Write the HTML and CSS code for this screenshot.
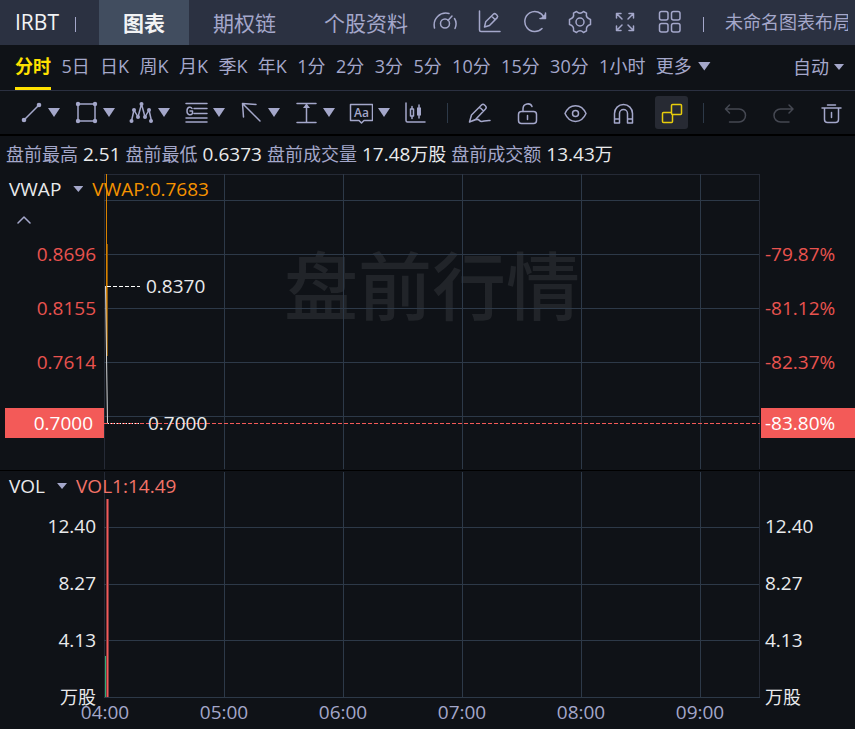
FILE: index.html
```html
<!DOCTYPE html>
<html lang="zh-CN">
<head>
<meta charset="utf-8">
<title>IRBT 图表</title>
<link rel="stylesheet" href="styles.css">
</head>
<body>
<header class="topbar">
  <h1 class="symbol">IRBT</h1>
  <span class="bar-divider"></span>
  <nav class="tabs">
    <a class="tab tab-active" href="#chart">图表</a>
    <a class="tab" href="#options">期权链</a>
    <a class="tab" href="#profile">个股资料</a>
  </nav>
  <div class="top-icons">
    <button class="icon-btn" aria-label="仪表盘"><svg viewBox="0 0 24 24"><path d="M1.500 18C-.5 8.500 7 1.500 16 3.500M21.500 8.500c2 3 2 6.500.5 10"/><circle cx="12" cy="13.500" r="4.500"/><path d="M15 10.500 19 6"/></svg></button>
    <button class="icon-btn" aria-label="画图"><svg viewBox="0 0 24 24"><path d="M1.500 1v19q0 1.500 1.500 1.500h19"/><path d="m6.500 17 1.200-5.200 7.600-7.600q1.300-1.200 2.700 0l1 1q1.300 1.300 0 2.700l-7.500 7.600zM13.500 6l3.700 3.700"/></svg></button>
    <button class="icon-btn" aria-label="刷新"><svg viewBox="0 0 24 24"><path d="M19 18.500A10 10 0 1 1 21 7.500"/><path d="M22.500 3v5.500H17"/><path class="fill" d="M23 3v6h-6z"/></svg></button>
    <button class="icon-btn" aria-label="设置"><svg viewBox="0 0 24 24"><path d="M8.500 1.500Q12 5 15.500 1.500l3 1.700q-1 4.800 4 6.300v5q-5 1.500-4 6.300l-3 1.700q-3.500-3.500-7 0l-3-1.700q1-4.800-4-6.300v-5q5-1.500 4-6.300z"/><circle cx="12" cy="12" r="4"/></svg></button>
    <button class="icon-btn" aria-label="全屏"><svg viewBox="0 0 24 24"><path d="M3.500 8V3.500H8M3.500 3.500 9 9M16 3.500h4.500V8M20.500 3.500 15 9M3.500 16v4.500H8M3.500 20.500 9 15M16 20.500h4.500V16M20.500 20.500 15 15"/></svg></button>
    <button class="icon-btn" aria-label="布局"><svg viewBox="0 0 24 24"><rect x="1.500" y="1.500" width="8.500" height="8.500" rx="2"/><rect x="13.500" y="1.500" width="8.500" height="8.500" rx="2"/><rect x="1.500" y="13.500" width="8.500" height="8.500" rx="2"/><rect x="13.500" y="13.500" width="8.500" height="8.500" rx="2"/></svg></button>
  </div>
  <span class="bar-divider"></span>
  <button class="layout-name">未命名图表布局</button>
</header>

<div class="periods">
  <nav class="period-list">
    <button class="period period-active">分时</button>
    <button class="period">5日</button>
    <button class="period">日K</button>
    <button class="period">周K</button>
    <button class="period">月K</button>
    <button class="period">季K</button>
    <button class="period">年K</button>
    <button class="period">1分</button>
    <button class="period">2分</button>
    <button class="period">3分</button>
    <button class="period">5分</button>
    <button class="period">10分</button>
    <button class="period">15分</button>
    <button class="period">30分</button>
    <button class="period">1小时</button>
    <button class="period">更多<span class="caret"></span></button>
  </nav>
  <button class="period period-auto">自动<span class="caret caret-small"></span></button>
</div>

<div class="toolbar">
  <div class="draw-tools">
    <button class="draw" aria-label="线段"><svg viewBox="0 0 24 24"><path d="M5 20 20 5"/><g class="fill"><circle cx="5" cy="20" r="2.300"/><circle cx="20" cy="5" r="2.300"/></g></svg><span class="caret"></span></button>
    <button class="draw" aria-label="矩形"><svg viewBox="0 0 24 24"><path d="M4 4h17v17H4z"/><g class="fill"><circle cx="4" cy="4" r="2.200"/><circle cx="21" cy="4" r="2.200"/><circle cx="4" cy="21" r="2.200"/><circle cx="21" cy="21" r="2.200"/></g></svg><span class="caret"></span></button>
    <button class="draw" aria-label="形态"><svg viewBox="0 0 24 24"><path d="M2.500 21 5 10l4 7 3.500-13 3.500 13 4-7 2.500 11"/><g class="fill"><circle cx="2.500" cy="21" r="2"/><circle cx="5" cy="10" r="2"/><circle cx="9" cy="17" r="2"/><circle cx="12.500" cy="4" r="2"/><circle cx="16" cy="17" r="2"/><circle cx="20" cy="10" r="2"/><circle cx="22" cy="21" r="2"/></g></svg><span class="caret"></span></button>
    <button class="draw" aria-label="江恩线"><svg viewBox="0 0 24 24"><path d="M2 3.500h21M10 8.500h13M10 13.500h13M2 18h21M2 22h21"/><path d="M8 8.500C7 6.500 3 6.500 3 11s4 4.500 5.500 2.500v-2.500H6"/></svg><span class="caret"></span></button>
    <button class="draw" aria-label="箭头"><svg viewBox="0 0 24 24"><path d="M21 21 4 4M17 4.500 3.500 3.500l1 13.500"/></svg><span class="caret"></span></button>
    <button class="draw" aria-label="测量"><svg viewBox="0 0 24 24"><path d="M3 3.500h19M3 22.500h19M12.500 5v17"/><path class="fill" d="m12.500 3.500 3.500 4.500H9z"/></svg><span class="caret"></span></button>
    <button class="draw" aria-label="文字"><svg viewBox="0 0 24 24"><path d="M1.500 4.500h22v16h-8.500l-2.500 2.500-2.500-2.500H1.500z"/><text class="glyph" x="5" y="17">Aa</text></svg><span class="caret"></span></button>
    <button class="draw" aria-label="K线"><svg viewBox="0 0 24 24"><path d="M2 3v17.500q0 1.500 1.500 1.500H21M6.500 9h3v7h-3zM8 6.500V9M8 16v2.500M15 5v13"/><path class="fill" d="M13 7.500h4v8h-4z"/></svg></button>
  </div>
  <span class="tool-divider"></span>
  <button class="tool" aria-label="连续绘图"><svg viewBox="0 0 24 24"><path d="m1.500 21 2-7L13.500 4q1.500-1.500 3 0l1 1q1.500 1.500 0 3l-10 10.500zM11.500 6l4 4M1.500 21c6-2 8-4 10-1.500 2 2.500 5-.5 10.500 0"/></svg></button>
  <button class="tool" aria-label="锁定"><svg viewBox="0 0 24 24"><rect x="2.500" y="10.500" width="18" height="12" rx="3"/><path d="M7 10.500V8c0-6 7.500-6.500 9-2.500M11.500 14.500v4"/></svg></button>
  <button class="tool" aria-label="显示"><svg viewBox="0 0 24 24"><path d="M1 12.500C5.500 2 17.500 2 22 12.500 17.500 23 5.500 23 1 12.500z"/><circle cx="11.500" cy="12.500" r="3"/></svg></button>
  <button class="tool" aria-label="磁吸"><svg viewBox="0 0 24 24"><path d="M2.500 22V12.500a9 9 0 0 1 18 0V22h-5v-9.500a4 4 0 0 0-8 0V22zM2.500 18h5M15.500 18h5"/></svg></button>
  <button class="tool tool-active" aria-label="联动"><svg viewBox="0 0 24 24"><rect x="11.500" y="3.500" width="10" height="10" rx="1"/><path d="M11 11.500H3.500q-1 0-1 1v8q0 1 1 1h8q1 0 1-1v-7"/></svg></button>
  <span class="tool-divider"></span>
  <button class="tool tool-muted" aria-label="撤销"><svg viewBox="0 0 24 24"><path d="m5.500 4-4 4H15a6.500 6.500 0 0 1 0 13H5.500M1.500 8l4 4"/></svg></button>
  <button class="tool tool-muted" aria-label="重做"><svg viewBox="0 0 24 24"><path d="m17 4 4 4H8.500a6.500 6.500 0 0 0 0 13H17M21 8l-4 4"/></svg></button>
  <button class="tool" aria-label="删除"><svg viewBox="0 0 24 24"><path d="M2 7h19M7.500 4h8M4.500 7v11.500q0 3 3 3h8q3 0 3-3V7M11.500 11.500v5"/></svg></button>
</div>

<main id="chart">
  <dl class="stats">
    <dt>盘前最高</dt><dd>2.51</dd>
    <dt>盘前最低</dt><dd>0.6373</dd>
    <dt>盘前成交量</dt><dd>17.48<small>万股</small></dd>
    <dt>盘前成交额</dt><dd>13.43<small>万</small></dd>
  </dl>

  <section class="pane price-pane">
    <div class="legend"><button class="legend-name">VWAP<span class="caret caret-small"></span></button><span class="legend-vwap">VWAP:0.7683</span></div>
    <div class="axis axis-left">
      <button class="collapse" aria-label="收起"><svg viewBox="0 0 14 14"><path d="m1 10 6-6 6 6"/></svg></button>
      <span class="tick">0.8696</span><span class="tick">0.8155</span><span class="tick">0.7614</span>
      <span class="last">0.7000</span>
    </div>
    <div class="plot">
      <div class="watermark">盘前行情</div>
      <svg class="drawing" viewBox="0 0 656 296" preserveAspectRatio="none">
        <path class="edge" d="M0 .5h656M.5 0v295M655.500 0v295"/>
        <path class="grid" d="M0 26.500h655M0 80.500h655M0 134.500h655M0 188.500h655M0 242.500h655M120.500 0v295M239.500 0v295M358.500 0v295M477.500 0v295M596.500 0v295"/>
        <path class="vwap" d="M2.500 0v182"/>
        <path class="vwap-shade" d="M3.500 70v112"/>
        <path class="price" d="M1.500 112 3.500 249"/>
        <path class="last-line" d="M0 249.500h656"/>
        <path class="marker" d="M3 112.500h33"/>
        <path class="marker marker-dots" d="M4 249.500h33"/>
      </svg>
      <span class="callout callout-high">0.8370</span>
      <span class="callout callout-low">0.7000</span>
    </div>
    <div class="axis axis-right">
      <span class="tick">-79.87%</span><span class="tick">-81.12%</span><span class="tick">-82.37%</span>
      <span class="last">-83.80%</span>
    </div>
  </section>

  <section class="pane volume-pane">
    <div class="legend"><button class="legend-name">VOL<span class="caret caret-small"></span></button><span class="legend-vol">VOL1:14.49</span></div>
    <div class="axis axis-left">
      <span class="tick">12.40</span><span class="tick">8.27</span><span class="tick">4.13</span><span class="tick unit">万股</span>
    </div>
    <div class="plot">
      <svg class="drawing" viewBox="0 0 656 227" preserveAspectRatio="none">
        <path class="edge" d="M.5 1v226M655.500 1v226"/>
        <path class="grid" d="M0 56.500h655M0 113.500h655M0 169.500h655M0 226.500h656M120.500 1v226M239.500 1v226M358.500 1v226M477.500 1v226M596.500 1v226"/>
        <path class="vol-up" d="M1.500 185v41"/>
        <path class="vol-shade" d="M2.500 28v198"/>
        <path class="vol-down" d="M3.500 28v198"/>
        <path class="vol-shade" d="M4.500 28v198"/>
      </svg>
      <div class="times">
        <time>04:00</time><time>05:00</time><time>06:00</time><time>07:00</time><time>08:00</time><time>09:00</time>
      </div>
    </div>
    <div class="axis axis-right">
      <span class="tick">12.40</span><span class="tick">8.27</span><span class="tick">4.13</span><span class="tick unit">万股</span>
    </div>
  </section>
</main>
</body>
</html>
```
FILE: styles.css
```css
:root {
  --bg: #0f1217;
  --bar: #2b3141;
  --muted: #a4a7ca;
  --text: #e9eaec;
  --grid: #2d3948;
  --edge: #252a36;
  --red: #e9534f;
  --tag: #f35a58;
}

* { box-sizing: border-box; }

body {
  margin: 0;
  min-height: 100vh;
  background: var(--bg);
  color: var(--text);
  font: 18px/24px "Open Sans", "Noto Sans CJK SC", sans-serif;
  overflow-x: hidden;
}

button {
  padding: 0;
  border: 0;
  background: none;
  color: inherit;
  font: inherit;
  white-space: nowrap;
}

svg {
  display: block;
  fill: none;
  stroke: currentColor;
  stroke-width: 1.5;
  stroke-linecap: round;
  stroke-linejoin: round;
}

.fill { fill: currentColor; stroke: none; }

.glyph {
  fill: currentColor;
  stroke: none;
  font: 600 12px "Open Sans", sans-serif;
}

.caret {
  width: 13px;
  height: 9px;
  background: var(--muted);
  clip-path: polygon(0 0, 100% 0, 50% 100%);
}

.caret-small { width: 10px; height: 6px; }

/* Top bar */
.topbar {
  display: flex;
  align-items: center;
  height: 45px;
  padding: 0 7px 2px 15px;
  background: var(--bar);
  color: var(--muted);
}

.symbol {
  width: 60px;
  margin: 0;
  color: #f2f3f4;
  font-size: 21px;
  font-weight: 400;
}

.bar-divider {
  flex: none;
  width: 1px;
  height: 15px;
  margin-top: 6px;
  background: var(--muted);
}

.tabs { display: flex; height: 45px; margin: 2px 0 0 23px; }

.tab {
  padding: 0 24px;
  color: var(--muted);
  font-size: 21px;
  line-height: 46px;
  text-decoration: none;
  white-space: nowrap;
}

.tab-active { background: #414d5f; color: #f2f3f4; font-weight: 700; }

.top-icons { display: flex; gap: 21px; margin: 0 21px 0 1px; }

.icon-btn svg { width: 24px; height: 24px; }

.layout-name { flex: 1; margin-left: 21px; overflow: hidden; text-align: left; }

/* Periods */
.periods {
  display: flex;
  justify-content: space-between;
  height: 46px;
  padding: 0 11px 0 15px;
  border-bottom: 1px solid #2b3041;
  color: var(--muted);
}

.period-list {
  display: flex;
  flex: 0 1 696px;
  justify-content: space-between;
}

.period {
  display: flex;
  align-items: center;
  gap: 6px;
  border-bottom: 3px solid transparent;
}

.period-active { border-color: #ffe100; color: #ffe100; font-weight: 700; }

.period-auto { gap: 5px; padding-top: 2px; }

/* Drawing toolbar */
.toolbar {
  display: flex;
  align-items: center;
  gap: 15px;
  height: 45px;
  padding: 0 7px 0 19px;
  border-bottom: 2px solid #000;
  color: var(--muted);
}

.draw-tools { display: flex; gap: 14px; margin-right: 4px; }

.draw { display: flex; align-items: center; gap: 5px; }

.draw svg, .tool svg { width: 24px; height: 24px; }

.draw svg { margin-bottom: 2px; }

.draw .caret { width: 12px; }

.tool-divider { width: 1px; height: 20px; background: var(--grid); }

.tool {
  display: grid;
  place-items: center;
  width: 33px;
  height: 33px;
  border-radius: 3px;
}

.tool-active { background: #272a33; color: #e8cd0c; }

.tool-muted { color: #454852; }

/* Session stats */
.stats {
  display: flex;
  align-items: center;
  gap: 5px;
  height: 38px;
  margin: 0;
  padding: 0 0 2px 6px;
  white-space: nowrap;
}

.stats dt { color: var(--muted); }

.stats dd { margin: 0; font-size: 19px; }

.stats small { font-size: 18px; }

/* Chart panes */
.pane {
  position: relative;
  display: grid;
  grid-template-columns: 104px 1fr 95px;
  font-size: 19px;
}

.price-pane { height: 296px; }

.volume-pane { border-top: 1px solid #000; }

.legend {
  position: absolute;
  z-index: 1;
  top: 3px;
  left: 9px;
  display: flex;
  gap: 9px;
}

.legend-name { display: flex; align-items: center; gap: 12px; }

.legend-vwap { color: #f59300; }

.legend-vol { color: #f37368; }

.axis { display: flex; flex-direction: column; }

.price-pane .axis { padding-top: 53px; color: var(--red); }

.volume-pane .axis { padding-top: 27px; }

.axis-left { position: relative; text-align: right; }

.tick { line-height: 54px; }

.volume-pane .tick { line-height: 57px; }

.volume-pane .unit { font-size: 18px; }

.axis-left .tick { padding-right: 8px; }

.axis-right .tick { padding-left: 5px; }

.last {
  margin-top: 19px;
  background: var(--tag);
  color: #fff;
  line-height: 30px;
}

.axis-left .last { margin-left: 5px; padding-right: 11px; }

.axis-right .last { margin-left: 1px; padding-left: 4px; }

.collapse {
  position: absolute;
  top: 39px;
  left: 17px;
  color: var(--muted);
}

.collapse svg { width: 14px; height: 14px; }

.plot { position: relative; min-width: 0; }

.drawing {
  position: relative;
  width: 100%;
  stroke-width: 1;
  stroke-linecap: butt;
  shape-rendering: crispEdges;
}

.price-pane .drawing { height: 296px; }

.volume-pane .drawing { height: 227px; }

.drawing path { vector-effect: non-scaling-stroke; }

.edge { stroke: var(--edge); }
.grid { stroke: var(--grid); }
.vwap { stroke: #d98200; }
.vwap-shade { stroke: #8a5708; }
.price { stroke: #d4d5d7; shape-rendering: auto; }
.last-line { stroke: var(--tag); stroke-dasharray: 4 2; }
.marker { stroke: #fff; stroke-dasharray: 4 2; }
.marker-dots { stroke-dasharray: 1 2; }
.vol-up { stroke: #2fae76; }
.vol-shade { stroke: #85393d; }
.vol-down { stroke: #f35a58; }

.watermark {
  position: absolute;
  inset: 0;
  bottom: 72px;
  display: grid;
  place-items: center;
  color: #212429;
  font-size: 74px;
  font-weight: 500;
  white-space: nowrap;
}

.callout { position: absolute; line-height: 24px; }

.callout-high { top: 100px; left: 42px; }

.callout-low { top: 237px; left: 44px; }

.times {
  display: grid;
  grid-template-columns: repeat(5, 119fr) 60fr;
  justify-items: start;
  padding: 2px 0 0 1px;
  color: var(--muted);
}

.times time { transform: translateX(-50%); }
```
